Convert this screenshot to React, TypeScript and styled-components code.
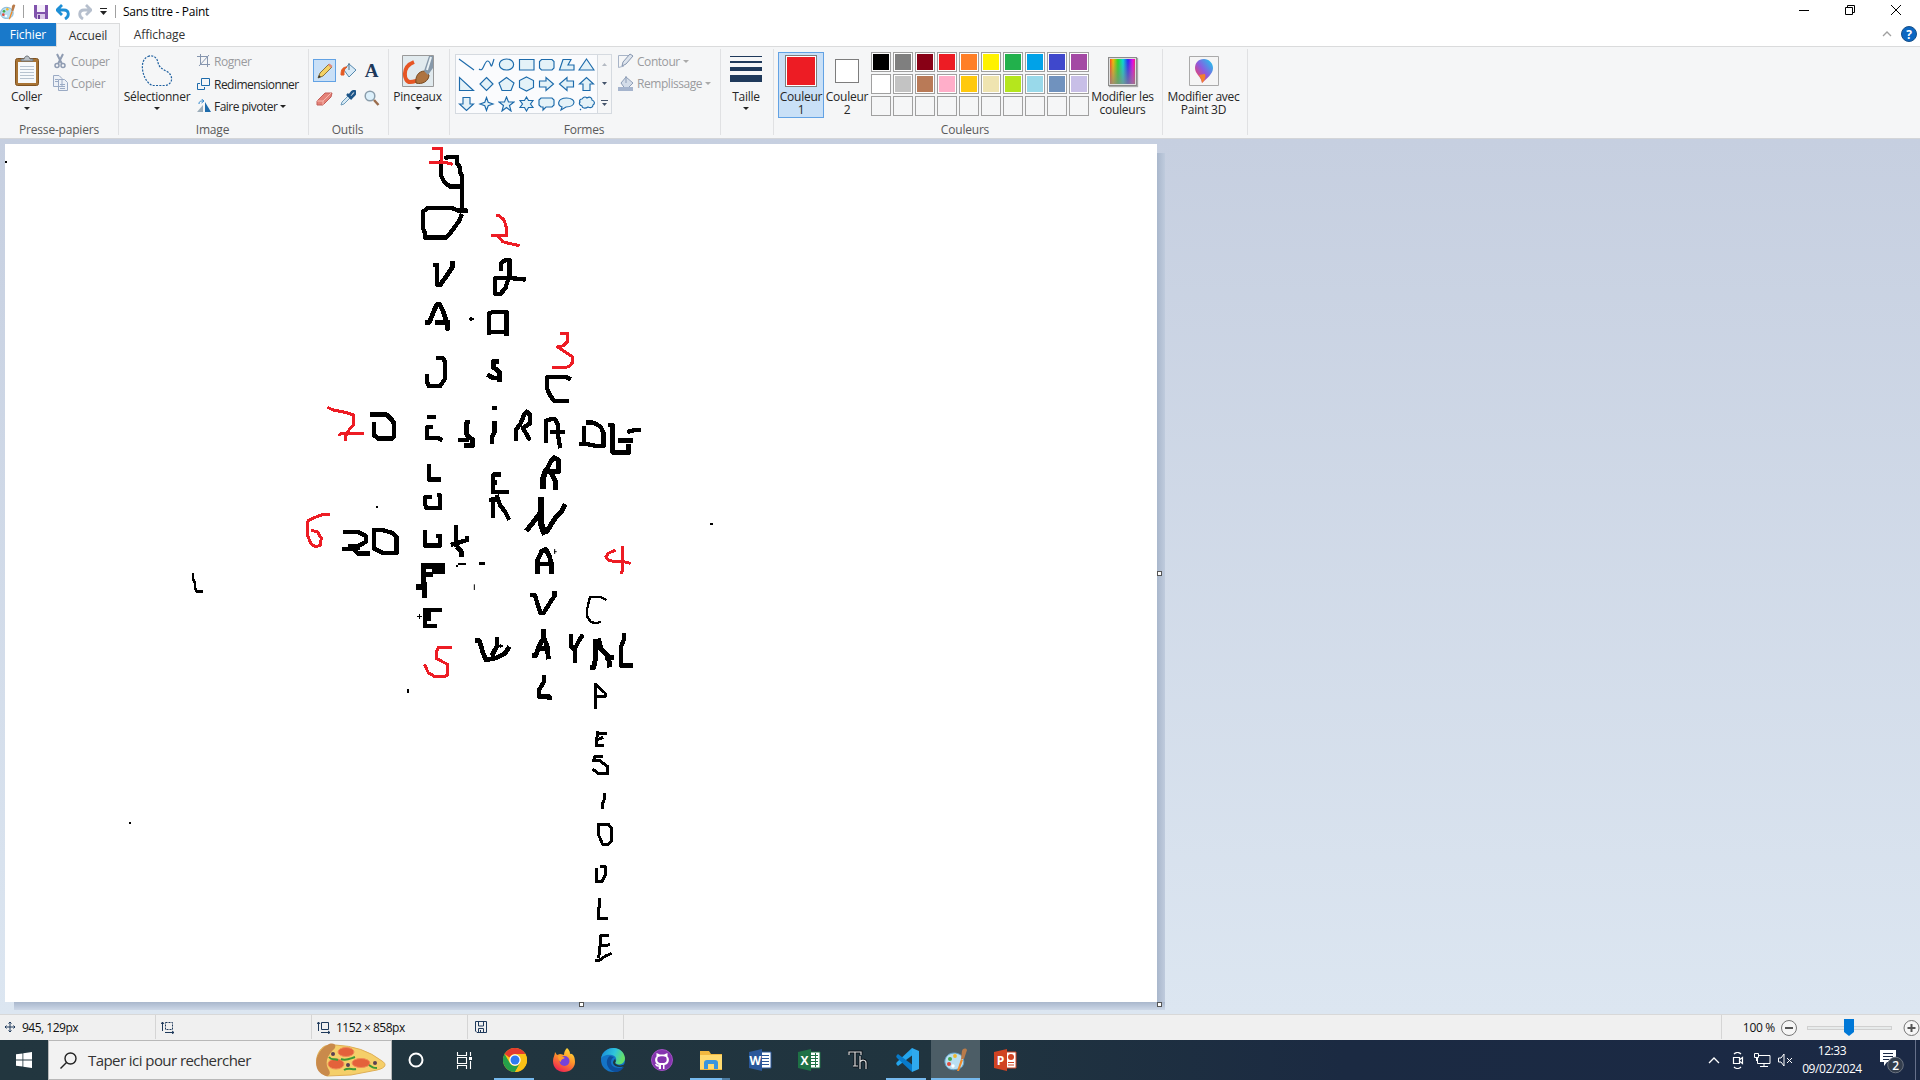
import React from "react";
import styled, { createGlobalStyle } from "styled-components";

const Global = createGlobalStyle`
  * { box-sizing: border-box; }
  body { margin: 0; overflow: hidden; background: #fff; }
  svg { display: block; flex: none; }
`;

const Window = styled.div`
  width: 1920px; height: 1080px; display: flex; flex-direction: column;
  font: 12px "Open Sans", "Noto Sans", sans-serif; color: #262626; letter-spacing: -0.2px;
  white-space: nowrap; overflow: hidden;
`;

/* ---------- title bar and tabs ---------- */
const TitleBar = styled.header`
  height: 23px; flex: none; display: flex; align-items: center; background: #fff; color: #000;
  line-height: 23px; letter-spacing: -0.3px;
`;
const QuickDivider = styled.i<{ $l: number; $r: number }>`
  width: 1px; height: 13px; background: #a0a0a0; margin: 0 ${p => p.$r}px 0 ${p => p.$l}px;
`;
const QuickIcon = styled.span<{ $r: number }>`margin-right: ${p => p.$r}px;`;
const WindowTitle = styled.span`flex: 1;`;
const WindowButtons = styled.div`
  display: flex; padding: 0 1px 3px 0;
  button { all: unset; width: 46px; height: 20px; display: grid; place-items: center; }
`;

const Tabs = styled.nav`height: 24px; flex: none; display: flex; border-bottom: 1px solid #dadbdc; background: #fff;`;
const Tab = styled.div<{ $w: number; $kind?: "file" | "active" }>`
  width: ${p => p.$w}px; text-align: center; line-height: 24px; letter-spacing: ${p => (p.$kind ? -0.1 : 0)}px;
  height: ${p => (p.$kind === "active" ? 24 : 23)}px;
  background: ${p => (p.$kind === "file" ? "#1979ca" : p.$kind === "active" ? "#f5f6f7" : "#fff")};
  color: ${p => (p.$kind === "file" ? "#fff" : "#333")};
  border: ${p => (p.$kind === "active" ? "1px solid #dadbdc" : "0")}; border-bottom: 0;
`;
const TabTools = styled.div`margin-left: auto; display: flex; align-items: center; gap: 9px; padding: 0 3px 1px 0;`;

/* ---------- ribbon ---------- */
const Ribbon = styled.section`
  height: 92px; flex: none; display: flex; background: #f5f6f7; border-bottom: 1px solid #d3d5d8; padding-top: 2px;
`;
const Group = styled.div<{ $w: number }>`
  width: ${p => p.$w}px; height: 86px; border-right: 1px solid #e0e1e3; display: flex; flex-direction: column;
`;
const GroupBody = styled.div<{ $l?: number }>`height: 72px; flex: none; display: flex; padding-left: ${p => p.$l ?? 0}px;`;
const GroupLabel = styled.div<{ $r?: number }>`height: 17px; flex: none; line-height: 17px; text-align: center; color: #5a5a5a; padding-right: ${p => p.$r ?? 0}px;`;
const Big = styled.div<{ $w: number; $on?: boolean }>`
  width: ${p => p.$w}px; height: 66px; margin-top: 3px; display: flex; flex-direction: column; align-items: center;
  background: ${p => (p.$on ? "#c9e0f7" : "transparent")};
  box-shadow: ${p => (p.$on ? "inset 0 0 0 1px #62a2e4" : "none")};
`;
const BigIcon = styled.div`height: 38px; display: grid; place-items: center;`;
const BigLabel = styled.div`line-height: 13px; text-align: center; white-space: pre; letter-spacing: -0.25px;`;
const Arrow = styled.i<{ $c?: string; $t?: number; $l?: number }>`
  width: 0; height: 0; border: 3px solid transparent; border-bottom: 0; border-top-color: ${p => p.$c ?? "#222"};
  margin-top: ${p => p.$t ?? 0}px; margin-left: ${p => p.$l ?? 0}px;
`;
const Rows = styled.div<{ $l?: number }>`display: flex; flex-direction: column; padding-top: 2px; margin-left: ${p => p.$l ?? 0}px;`;
const Row = styled.div<{ $off?: boolean }>`
  height: 22px; display: flex; align-items: center; gap: 3px; color: ${p => (p.$off ? "#9a9b9e" : "#262626")};
  letter-spacing: ${p => (p.$off ? -0.45 : -0.53)}px; margin-top: ${p => (p.$off ? -1 : 0)}px; margin-bottom: ${p => (p.$off ? 1 : 0)}px;
`;
const ToolGrid = styled.div`display: grid; grid-template-columns: 23px 24px 23px; grid-template-rows: 23px 32px; padding: 10px 0 0 4px;`;
const Tool = styled.div<{ $on?: boolean }>`
  display: grid; place-items: center; ${p => p.$on && "background:#c9e0f7;box-shadow:inset 0 0 0 1px #62a2e4;"}
`;
const Gallery = styled.div`
  width: 157px; height: 60px; margin-top: 5px; border: 1px solid #d5dae0; background: #fafbfd; display: flex;
`;
const ShapeGrid = styled.div`width: 141px; display: grid; grid-template-columns: repeat(7, 20px); grid-template-rows: 19px 20px 19px; place-items: center;`;
const GalleryScroll = styled.div`
  flex: 1; border-left: 1px solid #d5dae0; background: #f5f6f7; display: grid; grid-template-rows: repeat(3, 1fr); place-items: center;
`;
const Bars = styled.div`width: 32px; i { display: block; background: #1e395b; margin-bottom: 4px; }`;
const Bar = styled.i<{ $h: number }>`height: ${p => p.$h}px;`;
const Current = styled.div<{ $s: number; $c: string }>`
  width: ${p => p.$s}px; height: ${p => p.$s}px; border: 1px solid #7d7d7d; padding: 1px;
  background: linear-gradient(${p => p.$c}, ${p => p.$c}) content-box, #fff;
`;
const Palette = styled.div`display: grid; grid-template-columns: repeat(10, 20px); grid-auto-rows: 20px; gap: 2px; padding-top: 1px;`;
const Swatch = styled.i<{ $c?: string }>`
  border: 1px solid #a0a0a0; padding: 1px; background: ${p => (p.$c ? `linear-gradient(${p.$c}, ${p.$c}) content-box, #fff` : "#f5f6f7")};
`;
const Spectrum = styled.div`
  width: 29px; height: 29px; border: 1px solid #8a8a8a; box-shadow: inset 0 0 0 1px #ddd, 1px 1px 1px #aaa;
  background: linear-gradient(transparent, #888c), linear-gradient(90deg, #f22, #fb0 15%, #2d2 33%, #0dd 52%, #22f 70%, #e0e 88%, #f24);
`;

/* ---------- workspace ---------- */
const Workspace = styled.main`height: 875px; flex: none; padding: 5px 0 0 5px; background: linear-gradient(#c6cfe0, #dce6f1);`;
const Sheet = styled.div`position: relative; width: 1152px; height: 858px; background: #fff;`;
const ShadowRight = styled.i`position: absolute; left: 1152px; top: 9px; width: 8px; height: 857px; background: linear-gradient(90deg, #a9b7cc, #bfcbdd);`;
const ShadowBottom = styled.i`position: absolute; left: 9px; top: 858px; width: 1151px; height: 8px; background: linear-gradient(#a9b7cc, #ccd7e7);`;
const Handle = styled.i<{ $x: number; $y: number }>`
  position: absolute; left: ${p => p.$x}px; top: ${p => p.$y}px; width: 5px; height: 5px; background: #fff; border: 1px solid #555;
`;

/* ---------- status bar ---------- */
const Status = styled.footer`height: 26px; flex: none; display: flex; background: #f0f0f0; border-top: 1px solid #d8d8d8; color: #111;`;
const Cell = styled.div<{ $w: number; $l?: number }>`
  width: ${p => p.$w}px; height: 24px; border-right: 1px solid #d5d5d5; display: flex; align-items: center; gap: 6px; padding-left: ${p => p.$l ?? 4}px;
  letter-spacing: -0.5px;
`;
const ZoomArea = styled.div`flex: 1; display: flex; align-items: center; padding-left: 21px; letter-spacing: -0.3px;`;
const Track = styled.div`width: 85px; height: 4px; margin: 0 11px 0 6px; border: 1px solid #d0d0d0; background: #e7eaea; display: flex; align-items: center; justify-content: center;`;

/* ---------- taskbar ---------- */
const Taskbar = styled.footer`height: 40px; flex: none; display: flex; background: linear-gradient(90deg, #22363f, #20343f 50%, #1b2a42 70%, #1b2945); color: #fff;`;
const Slot = styled.div<{ $w: number; $on?: boolean; $run?: boolean; $stack?: boolean }>`
  width: ${p => p.$w}px; height: 40px; display: flex; align-items: center; justify-content: center;
  background: ${p => (p.$on ? "#4c5d66" : "transparent")};
  ${p => p.$run && `background-image: linear-gradient(#76b9ed, #76b9ed)${p.$stack ? ", linear-gradient(#4b7ba0, #4b7ba0)" : ""};
    background-repeat: no-repeat; background-size: ${p.$on ? 49 : p.$stack ? 32 : 40}px 2px, 8px 2px; background-position: ${p.$on ? 0 : 4}px 38px, 36px 38px;`}
`;
const Search = styled.div`
  width: 344px; height: 40px; background: #f2f2f2; border: 1px solid #b8b8b8; display: flex; align-items: center; color: #333;
  font-size: 15px; letter-spacing: -0.56px; padding-left: 11px; gap: 11px;
`;
const SearchText = styled.span`width: 216px;`;
const Apps = styled.div`display: flex; padding-left: 2px;`;
const Tray = styled.div`margin-left: auto; display: flex; align-items: center;`;
const TrayIcon = styled.span<{ $w: number }>`width: ${p => p.$w}px; display: grid; place-items: center;`;
const Clock = styled.div`width: 70px; text-align: center; line-height: 18px; letter-spacing: -0.4px;`;
const Desktop = styled.i`width: 5px; height: 40px; border-left: 1px solid #66708a;`;

const B = "#1d6bab";
const Svg = ({ s = 16, h, v, children }: { s?: number; h?: number; v?: string; children: React.ReactNode }) => (
  <svg width={s} height={h ?? s} viewBox={v ?? `0 0 ${s} ${h ?? s}`} fill="none">{children}</svg>
);

const PaintIcon = ({ s = 16 }: { s?: number }) => (
  <Svg s={s} v="0 0 24 24">
    <path d="M10 5C4 5 0 10 1 15c1 6 7 8 13 6 5-1 7-6 5-11-1-3-5-5-9-5Z" fill="#b9dff2" stroke="#5d9cc3" />
    <circle cx="6" cy="11" r="2" fill="#46a94d" /><circle cx="11" cy="8" r="1.9" fill="#f0b72d" /><circle cx="5" cy="16" r="2" fill="#e04b3e" /><circle cx="9" cy="18" r="1.7" fill="#fff" />
    <path d="m13 23 4-12 2 1-4 11Z" fill="#ef8b2c" /><path d="m17 11 1-8c1-3 4-3 5-1l-3 9Z" fill="#b97b4a" />
  </Svg>
);

const Ink = ({ d, w = 14, c = "#000" }: { d: string; w?: number; c?: string }) => <path d={d} strokeWidth={w} stroke={c} />;
const RED = "#ed1c24";

const Drawing = () => (
  <svg width="1152" height="858" viewBox="5 144 1152 858" fill="none" shapeRendering="crispEdges" strokeLinejoin="round">
    <g transform="translate(280 140) scale(.33333)">
      <Ink w={13} d="M494 57L502 51H532V72L540 82V98L546 106V214M484 60V108L492 125L510 140H546M534 214H563" />
      <Ink w={13} d="M546 222L536 245L510 280L497 293H436V282L429 265V215L442 205H518L535 212H560" />
      <Ink d="M459 375H471V434H481L505 400L518 380V364" />
      <Ink w={13} d="M663 392V370L675 361H689V412M645 464V415H700L737 419M684 420L676 445L660 463H641" />
      <Ink d="M435 547H448L462 512L470 494H480L490 515L500 545L504 572M465 547H509" />
      <Ink w={4} d="M567 537H581M573 531V543" />
      <Ink w={13} d="M628 584V520L636 517H680V587M622 577H684" />
      <Ink w={13} d="M468 655H488L496 665V715L480 739H447L441 725V703" />
      <Ink d="M657 664H640V682L658 695V725M622 704L640 714H662" />
      <Ink w={13} d="M872 718L860 712H801V745L810 765L822 783H866" />
      <Ink w={9} c={RED} d="M457 26H485V67M447 67H495L518 73M648 227H658L672 240L680 265V286H633M655 290L668 305L690 311L719 317M840 580H862V605L850 617L832 621L842 627L862 640L877 650V668L866 680L850 683H816" />
    </g>
    <g transform="translate(280 400) scale(.33333)">
      <Ink d="M271 43H318L335 58L342 70V110L335 116H295L282 105V67" />
      <Ink w={13} d="M441 52H467M458 82H441V115H476L487 120M569 66H560V105L578 118V137H553M535 121H566" />
      <Ink d="M635 24H650" /><Ink d="M644 62V95L636 112V131" />
      <Ink w={13} d="M708 122V90L722 70L732 45L740 35L750 45V70L728 85L735 95L750 121" />
      <Ink w={13} d="M799 130V62L812 58H825L834 75V105L841 145M810 97H855" />
      <Ink w={13} d="M917 68H940L962 80L971 100V138H948M913 78V130M898 133H925L950 138" />
      <Ink w={13} d="M985 76H998V158H1046V133M1015 122H1058M1042 96L1060 91H1083" />
      <Ink w={13} d="M448 192V239H483M470 286H480V325H440L436 315V292H455" />
      <Ink w={13} d="M662 224H640V280M640 248H650M634 277H687M628 300H657M639 290V353M650 285L660 315L675 335L688 360" />
      <Ink w={17} d="M800 205L789 235V268" /><Ink d="M798 212L814 182L822 173L836 180V215H800M814 220L827 245V270" />
      <Ink w={15} d="M739 393L760 366L780 340" /><Ink w={19} d="M784 292V375L795 404" /><Ink w={15} d="M797 400L825 355L845 333L856 313" />
      <Ink w={6} d="M289 321h6M384 867V879" />
      <Ink w={13} d="M189 396H235L258 408V425L235 438H205M270 461H235L222 447H187" />
      <Ink w={14} d="M205 442H240" />
      <Ink w={13} d="M282 385V445L310 460H350V410L335 398L310 391H276" />
      <Ink w={13} d="M436 390V437H480V403M467 409H485M528 376V440M512 435L545 425L562 420V408M530 440L545 455V470" />
      <Ink w={5} d="M529 498h6M535 492H557M411 650H425M419 643V657M657 738H668M662 732V744" />
      <Ink w={8} d="M597 491H615" /><Ink w={3} d="M583 553V570M822 455H830M824 447V462" />
      <Ink w={15} d="M430 490V570M433 545V593" /><Ink w={18} d="M423 498H494" /><Ink w={14} d="M457 514H494" /><Ink w={14} d="M430 523H460" /><Ink w={18} d="M408 561H436" />
      <Ink w={13} d="M428 630H486M430 679H470M435 630V685" /><Ink w={24} d="M441 624V662" />
      <Ink d="M773 522V480L785 454L798 448L808 468L814 490V522M775 492H820" />
      <Ink w={13} d="M750 586H765L772 610L782 640H790L815 600L824 588V574" />
      <Ink w={7} d="M980 600L960 591H930L922 625V650L932 665L945 670L962 666" />
      <Ink d="M757 766H768L776 740L790 715V688M790 710L800 735L806 778M770 745H810" />
      <Ink d="M585 722H598L608 755L618 780L650 773L675 760L688 740M651 712V738L635 768" />
      <Ink w={13} d="M873 702V738L885 750V788M885 745L897 722L909 704" />
      <Ink w={15} d="M931 802H941L948 770V716M955 715L962 745L985 770L990 802M975 772H1002" />
      <Ink w={13} d="M1033 700V715L1023 740V797H1058" />
      <Ink w={13} d="M792 826V845L777 870V890H809V899" />
      <Ink w={9} c={RED} d="M142 22L160 30L200 38L221 45V75L208 88L196 110V124M177 108L183 100H251M150 343H130L105 352L84 362V410L92 430L105 440L120 437L124 415L112 395L93 391M1006 450L985 460L978 470L985 480L1000 484H1025L1052 490M1029 438V490L1025 523M515 743H475L469 755V775L502 793V825L495 830H465L445 818L433 793" />
    </g>
    <g transform="translate(540 670) scale(.33333)">
      <Ink w={8} d="M166 116V42L196 70V80H168" />
      <Ink w={9} d="M172 183V190H201M172 190L169 228H191M172 209L190 202M188 259H165L160 272H180L203 290V312H178L157 297M194 370V385L188 400V416M176 463V495L188 523H205L215 512V475L205 463H172M169 594V635H186L196 615V590H180M179 684V705L175 720V745H203M207 797H183L180 830L176 865M176 828H195L210 823M165 873H175L195 859L215 850" />
    </g>
    <path d="M193 573V579L195 583V588L197 591.500H203" stroke="#000" strokeWidth="2.6" />
    <path d="M5 162h2M129 823h2M710 524h3" stroke="#000" strokeWidth="2" />
  </svg>
);

const shapes: string[] = [
  "M1 2 16 13", "M1 12C6 16 6 3 10 4s2 12 6-2", "M8.500 2C-1 2-1 13 8.500 13S18 2 8.500 2Z", "M1.500 2.500H16V13H1.500Z",
  "M3.500 2.500H14l2 2V11l-2 2H3.500l-2-2V4.500Z", "M5 2.500h8L10 8h6v5H1.500Z", "M8.500 2 16 13H1Z",
  "M1.500 1.500V14.500H15.500Z", "M8.500 1.500 15 8 8.500 14.500 2 8Z", "M8.500 1.500 16 7 13 14.500H4L1 7Z", "M8.500 1 15.500 4.500v7L8.500 15 1.500 11.500v-7Z",
  "M1.500 5H8V1.500L15.500 8 8 14.500V11H1.500Z", "M15.500 5H9V1.500L1.500 8 9 14.500V11h6.500Z", "M5 14.500V8H1.500L8.500 1.500 15.500 8H12v6.500Z",
  "M5 1.500V8H1.500l7 6.500 7-6.500H12V1.500Z", "m8.500 1.500 1.700 4.800L15 8l-4.800 1.700-1.700 4.800-1.700-4.800L2 8l4.800-1.700Z",
  "m8.500 1 2 5H16l-4.500 3.500L13 15l-4.500-3.500L4 15l1.500-5.500L1 6h5.500Z", "m8.500 1 2 3.500H15L12.500 8l2.500 3.500h-4.500l-2 3.500-2-3.500H2L4.500 8 2 4.500h4.500Z",
  "M3 2h11l2 2v5l-2 2H8l-3 3v-3H3L1 9V4Z", "M8.500 2C-1 2-1 10 4 11l-1 3 5-3c10 0 11-9 .5-9Z", "M4 3c2-3 4-2 5-1 3-2 5 0 5 2 3 1 3 4 1 5 0 3-3 3-5 2-3 2-6 1-6-1-3-1-3-3-2-4-1-1 0-3 2-3ZM3 13l-1 1",
];

const colors = [
  "#000", "#7f7f7f", "#880015", "#ed1c24", "#ff7f27", "#fff200", "#22b14c", "#00a2e8", "#3f48cc", "#a349a4",
  "#fff", "#c3c3c3", "#b97a57", "#ffaec9", "#ffc90e", "#efe4b0", "#b5e61d", "#99d9ea", "#7092be", "#c8bfe7",
];

const Office = ({ c, t, sheet }: { c: string; t: string; sheet: React.ReactNode }) => (
  <Svg s={24}>
    <path d="M12 4h11v16H12" fill="#fff" stroke={c} />{sheet}
    <path d="M1 4 14 1v22L1 20Z" fill={c} />
    <text x="7.300" y="16.500" textAnchor="middle" fill="#fff" fontFamily="Open Sans, sans-serif" fontWeight="700" fontSize="12">{t}</text>
  </Svg>
);

const BucketArt = ({ grey }: { grey?: boolean }) => (
  <>
    <path d="m4 8 5-6 7 6-7 7Z" fill={grey ? "#d4dde9" : "#d8eaf7"} stroke={grey ? "#8d9db6" : "#5488ae"} />
    <path d="M9 8V1" stroke={grey ? "#8d9db6" : "#4c7089"} />
    {grey ? <path d="M1 12h15v4H1Z" fill="#a5b4cd" /> : <path d="M1 13c0-6 2-8 6-8-3 2-3 4-3 8Z" fill="#e45a22" stroke="#e45a22" />}
  </>
);

export default function App() {
  return (
    <Window>
      <Global />
      <TitleBar>
        <QuickIcon $r={7}><PaintIcon /></QuickIcon>
        <QuickDivider $l={0} $r={10} />
        <QuickIcon $r={8}>
          <Svg s={14} h={14}><path d="M0 0h14v14H2l-2-2Z" fill="#8153ad" /><path d="M3 0h8v7H3Z" fill="#f4eefa" /><path d="M3 9h8v5H3Z" fill="#d9c9e8" /><path d="M4 10h2v4H4Z" fill="#6d419a" /></Svg>
        </QuickIcon>
        <QuickIcon $r={8}>
          <Svg s={14} h={16}><path d="m6 1-5 5 5 5M2 6h6c5 0 6 6 1 9" stroke="#1e8fd6" strokeWidth="2.800" /></Svg>
        </QuickIcon>
        <QuickIcon $r={8}>
          <Svg s={14} h={16}><path d="m8 1 5 5-5 5M12 6H6c-5 0-6 6-1 9" stroke="#b6bfcd" strokeWidth="2.800" /></Svg>
        </QuickIcon>
        <Svg s={7} h={9}><path d="M0 1.500h7" stroke="#222" /><path d="M0 4h7L3.500 8Z" fill="#222" /></Svg>
        <QuickDivider $l={8} $r={7} />
        <WindowTitle>Sans titre - Paint</WindowTitle>
        <WindowButtons>
          <button><Svg s={10}><path d="M0 5.500h10" stroke="#000" /></Svg></button>
          <button><Svg s={10}><path d="M.5 2.500h7v7h-7ZM2.500 2V.5h7v7H8" stroke="#000" /></Svg></button>
          <button><Svg s={10}><path d="m0 0 10 10M10 0 0 10" stroke="#000" /></Svg></button>
        </WindowButtons>
      </TitleBar>
      <Tabs>
        <Tab $w={56} $kind="file">Fichier</Tab>
        <Tab $w={64} $kind="active">Accueil</Tab>
        <Tab $w={79}>Affichage</Tab>
        <TabTools>
          <Svg s={10} h={6}><path d="m1 5 4-4 4 4" stroke="#a0a0a0" strokeWidth="1.300" /></Svg>
          <Svg s={16}><circle cx="8" cy="8" r="7.500" fill="#0c67c2" stroke="#174f88" /><text x="8" y="12.500" fill="#fff" fontSize="12" fontWeight="700" textAnchor="middle">?</text></Svg>
        </TabTools>
      </Tabs>

      <Ribbon>
        <Group $w={119}>
          <GroupBody>
            <Big $w={53}>
              <BigIcon><Svg s={26} h={32}><rect x="1.500" y="3.500" width="23" height="27" rx="2" fill="#a87435" stroke="#805321" /><path d="M4 7h18v21H4Z" fill="#f6f9fb" /><path d="M6 11.500h14M6 14.500h14M6 17.500h14M6 20.500h14M6 23.500h14" stroke="#b7c3cf" /><path d="M7 6V4h3c1-4 5-4 6 0h3v2Z" fill="#b9c0c6" stroke="#6d747a" /></Svg></BigIcon>
              <BigLabel>Coller</BigLabel><Arrow $t={4} />
            </Big>
            <Rows>
              <Row $off><Svg s={15} h={16}><path d="M4 1 9 11M10 1 5 11" stroke="#8f9cb2" strokeWidth="2" /><circle cx="4" cy="12.500" r="2" stroke="#8f9cb2" strokeWidth="1.500" /><circle cx="10" cy="12.500" r="2" stroke="#8f9cb2" strokeWidth="1.500" /></Svg>Couper</Row>
              <Row $off><Svg s={15} h={16}><path d="M.5.500H6l3 3v8H.5ZM5.500 4.500h6l3 3v8h-9Z" fill="#edf1f7" stroke="#9aaac4" /><path d="M7 9.500h5M7 11.500h5M7 13.500h5M2 4.500h3M2 6.500h3" stroke="#9aaac4" /></Svg>Copier</Row>
            </Rows>
          </GroupBody>
          <GroupLabel>Presse-papiers</GroupLabel>
        </Group>

        <Group $w={190}>
          <GroupBody $l={4}>
            <Big $w={68}>
              <BigIcon><Svg s={32}><path d="M7 1.500c5-2 9 1 10 6s5 7 9 9c7 4 6 14-3 14H12C3 29-4 6 7 1.500Z" stroke="#1d5f9f" strokeDasharray="2 1.300" strokeWidth="1.200" /></Svg></BigIcon>
              <BigLabel>Sélectionner</BigLabel><Arrow $t={4} />
            </Big>
            <Rows $l={6}>
              <Row $off><Svg s={14}><path d="M3.500 0v10.500H13M0 2.500h10.500V13M2 12 12 1" stroke="#8595ae" /></Svg>Rogner</Row>
              <Row><Svg s={14}><path d="M4.500 1.500h8v7h-8Z" stroke={B} /><path d="M3 6.500H.5v6h7V10" stroke={B} /></Svg>Redimensionner</Row>
              <Row><Svg s={14}><path d="M0 13 6 6v7Z" fill="#9cadba" /><path d="M8 3v10h6Z" fill="#1d6bab" /><path d="M2 5c0-3 2-3 4-3M4.500 0 7 2 4.500 4" stroke="#2d85cc" /></Svg>Faire pivoter<Arrow /></Row>
            </Rows>
          </GroupBody>
          <GroupLabel $r={2}>Image</GroupLabel>
        </Group>

        <Group $w={80}>
          <GroupBody>
            <ToolGrid>
              <Tool $on><Svg><path d="m1 15 2-5L12 1l3 3-9 9Z" fill="#f4d264" stroke="#8b743d" /><path d="m1 15 1-3 2 2Z" fill="#333" /><path d="m11 2 1.500-1.500L15.500 3 14 5Z" fill="#e28b7c" /></Svg></Tool>
              <Tool><Svg s={17}><BucketArt /></Svg></Tool>
              <Tool><Svg s={15}><text x="7.500" y="14" textAnchor="middle" fontFamily="Liberation Serif, serif" fontWeight="700" fontSize="19" fill="#1e395b">A</text></Svg></Tool>
              <Tool><Svg s={17}><path d="m1 11 8-8h7l-1 4-8 8H1Z" fill="#e48278" stroke="#c25e59" /><path d="m1 11h6l8-8M7 11v4" stroke="#f6b7ad" /></Svg></Tool>
              <Tool><Svg><path d="m1 15 1-3 7-7 2 2-7 7Z" fill="#d7eaf5" stroke="#6d9bba" /><path d="m7 4 5 5M9 6l3-4c3-2 5 0 2 3l-3 3" stroke="#1d5588" strokeWidth="2.500" /></Svg></Tool>
              <Tool><Svg><circle cx="6" cy="6" r="4.800" fill="#dcf0fb" stroke="#8a9dab" strokeWidth="1.500" /><path d="m10 10 4.500 5" stroke="#9b6d4d" strokeWidth="2.500" /></Svg></Tool>
            </ToolGrid>
          </GroupBody>
          <GroupLabel $r={2}>Outils</GroupLabel>
        </Group>

        <Group $w={61}>
          <GroupBody>
            <Big $w={57}>
              <BigIcon><Svg s={32}><path d="M.5.500h31v31H.5Z" fill="#e1eaee" stroke="#999" /><path d="M12 7C-1 12 2 27 8 27s5-2 10-1" stroke="#e65524" strokeWidth="4" /><path d="M14 28c-1-6 2-12 9-12l4 4c0 6-7 10-13 8Z" fill="#ae7340" stroke="#77491f" /><path d="m22 16 5-15h4v12l-5 7Z" fill="#8799aa" /><path d="m25 15 4-13" stroke="#e8f1f5" strokeWidth="2" /></Svg></BigIcon>
              <BigLabel>Pinceaux</BigLabel><Arrow $t={4} />
            </Big>
          </GroupBody>
        </Group>

        <Group $w={271}>
          <GroupBody $l={5}>
            <Gallery>
              <ShapeGrid>{shapes.map((d, i) => <Svg key={i} s={17} h={16}><path d={d} fill={i < 2 ? "none" : "#e4f2f8"} stroke={B} strokeWidth="1.150" /></Svg>)}</ShapeGrid>
              <GalleryScroll>
                <Svg s={5} h={3}><path d="M0 3h5L2.500 0Z" fill="#b4bac3" /></Svg>
                <Svg s={5} h={3}><path d="M0 0h5L2.500 3Z" fill="#43536a" /></Svg>
                <Svg s={7} h={7}><path d="M0 .5h7" stroke="#43536a" /><path d="M1 3h5L3.500 6Z" fill="#43536a" /></Svg>
              </GalleryScroll>
            </Gallery>
            <Rows $l={5}>
              <Row $off><Svg s={17}><path d="M12 2.500H1.500v12L7 13" stroke="#a8b4c7" /><path d="m5 13 1-4 7-8 3 2-7 8Z" fill="#dde4ed" stroke="#8696b0" /></Svg>Contour<Arrow $c="#aaa" /></Row>
              <Row $off><Svg s={17}><BucketArt grey /></Svg>Remplissage<Arrow $c="#aaa" /></Row>
            </Rows>
          </GroupBody>
          <GroupLabel $r={2}>Formes</GroupLabel>
        </Group>

        <Group $w={53}>
          <GroupBody>
            <Big $w={50}>
              <BigIcon><Bars><Bar $h={1} /><Bar $h={2} /><Bar $h={4} /><Bar $h={7} /></Bars></BigIcon>
              <BigLabel>Taille</BigLabel><Arrow $t={4} />
            </Big>
          </GroupBody>
        </Group>

        <Group $w={389}>
          <GroupBody $l={4}>
            <Big $w={46} $on><BigIcon><Current $s={32} $c="#ed1c24" /></BigIcon><BigLabel>{"Couleur\n1"}</BigLabel></Big>
            <Big $w={46}><BigIcon><Current $s={24} $c="#fff" /></BigIcon><BigLabel>{"Couleur\n2"}</BigLabel></Big>
            <Rows $l={1}><Palette>{Array.from({ length: 30 }, (_, i) => <Swatch key={i} $c={colors[i]} />)}</Palette></Rows>
            <Big $w={67}><BigIcon><Spectrum /></BigIcon><BigLabel>{"Modifier les\ncouleurs"}</BigLabel></Big>
          </GroupBody>
          <GroupLabel $r={6}>Couleurs</GroupLabel>
        </Group>

        <Group $w={85}>
          <GroupBody>
            <Big $w={81}>
              <BigIcon>
                <Svg s={30}>
                  <defs>
                    <linearGradient id="drop" x1="1" y1="0" x2="0" y2="1"><stop stopColor="#10d4ee" /><stop offset=".5" stopColor="#8b5be0" /><stop offset=".8" stopColor="#e0447c" /><stop offset="1" stopColor="#f9b51c" /></linearGradient>
                  </defs>
                  <path d="M.5.500h29v29H.5Z" fill="#f5f5f5" stroke="#aaa" />
                  <path d="M15 3c-6 0-9 4-9 9 0 6 6 8 7 15 5-5 11-9 11-15 0-5-4-9-9-9Z" fill="url(#drop)" />
                  <path d="M10 19c1 2 3 5 3 8 3-3 4-6 3-9Z" fill="#f1812d" />
                </Svg>
              </BigIcon>
              <BigLabel>{"Modifier avec\nPaint 3D"}</BigLabel>
            </Big>
          </GroupBody>
        </Group>
      </Ribbon>

      <Workspace>
        <Sheet>
          <Drawing />
          <ShadowRight /><ShadowBottom />
          <Handle $x={1152} $y={427} /><Handle $x={574} $y={858} /><Handle $x={1152} $y={858} />
        </Sheet>
      </Workspace>

      <Status>
        <Cell $w={156}><Svg s={12}><path d="M6 1v10M1 6h10M4.500 2.500 6 1l1.500 1.500M4.500 9.500 6 11l1.500-1.500M2.500 4.500 1 6l1.500 1.500M9.500 4.500 11 6 9.500 7.500" stroke="#1e395b" /></Svg>945, 129px</Cell>
        <Cell $w={156} $l={5}><Svg s={13}><path d="M1.500 10V1M0 3l1.500-2L3 3M4 11.500h9M11 10l2 1.500-2 1.500" stroke="#1e395b" /><path d="M4.500 1.500h7v7h-7Z" stroke="#1e395b" strokeDasharray="2 1" /></Svg></Cell>
        <Cell $w={156} $l={5}><Svg s={13}><path d="M1.500 10V1M0 3l1.500-2L3 3M4 11.500h9M11 10l2 1.500-2 1.500M4.500 1.500h7v7h-7Z" stroke="#1e395b" /></Svg>1152 × 858px</Cell>
        <Cell $w={156} $l={7}><Svg s={12}><path d="M.5.500h11v11H2l-1.500-1.500ZM3.500 1v4h5V1M3.500 11V7.500h5V11M5.500 9v2" stroke="#1e395b" /></Svg></Cell>
        <Cell $w={1098} />
        <ZoomArea>
          100 %
          <Svg s={26} h={18}><circle cx="14" cy="9" r="7.500" fill="#f6f6f6" stroke="#777" /><path d="M10 9h8" stroke="#555" strokeWidth="2" /></Svg>
          <Track><Svg s={10} h={17}><path d="M0 0h10v13l-5 4-5-4Z" fill="#0078d7" /></Svg></Track>
          <Svg s={17} h={18}><circle cx="8.500" cy="9" r="7.500" fill="#f6f6f6" stroke="#777" /><path d="M4.500 9h8M8.500 5v8" stroke="#555" strokeWidth="2" /></Svg>
        </ZoomArea>
      </Status>

      <Taskbar>
        <Slot $w={48}><Svg s={16}><path d="M0 2.300 6.500 1.400v6.200H0ZM7.300 1.300 16 0v7.600H7.300ZM0 8.400h6.500v6.200L0 13.700ZM7.300 8.400H16V16l-8.700-1.300Z" fill="#fff" /></Svg></Slot>
        <Search>
          <Svg s={17}><circle cx="10.500" cy="6.500" r="5.500" stroke="#222" strokeWidth="1.400" /><path d="m6.500 10.500-6 6" stroke="#222" strokeWidth="1.400" /></Svg>
          <SearchText>Taper ici pour rechercher</SearchText>
          <Svg s={72} h={34}>
            <path d="M10 3C-1 9-2 28 12 33l24-1 26-5c9-2 10-6 5-9Q48 3 20 2Z" fill="#f5cf69" stroke="#dfae55" />
            <path d="M14 1c7-2 8 3 4 6-7 7-8 14-4 20 2 4 0 6-3 6C-4 29-1 8 14 1Z" fill="#c98a4b" />
            <ellipse cx="31" cy="9" rx="8" ry="4.500" fill="#e4613b" stroke="#f08c57" /><ellipse cx="21" cy="21" rx="8" ry="5" fill="#e4613b" stroke="#f08c57" /><ellipse cx="46" cy="20" rx="9" ry="4.500" fill="#e4613b" stroke="#f08c57" />
            <path d="M14 14c3 4 5 1 9 3M26 16c5 2 8 0 14-2M29 27c5-3 8 0 12-1M54 22c4 3 5 3 8 3" stroke="#3d9a34" strokeWidth="2" />
            <circle cx="18" cy="11" r="2" fill="#594052" /><circle cx="33" cy="22" r="2" fill="#594052" /><circle cx="60" cy="20" r="2" fill="#594052" />
          </Svg>
        </Search>
        <Slot $w={48}><Svg s={16}><circle cx="8" cy="8" r="6.500" stroke="#fff" strokeWidth="2" /></Svg></Slot>
        <Slot $w={48}><Svg s={17}><path d="M1.500 0v3.500h9V0M1.500 17v-3.500h9V17M1.500 5.500h9v6h-9ZM14.500 0v4M14.500 9v8" stroke="#fff" strokeWidth="1.100" /><path d="M13 5h3v3h-3Z" fill="#fff" /></Svg></Slot>
        <Apps>
          <Slot $w={49} $run>
            <Svg s={24}><circle cx="12" cy="12" r="12" fill="#fbc116" /><path d="M1.600 6A12 12 0 0 1 22.400 6H12a6 6 0 0 0-5.500 3.500Z" fill="#e33b2e" /><path d="M1.600 6A12 12 0 0 0 12 24l5.200-9A6 6 0 0 1 6.800 15Z" fill="#25a04a" /><path d="M12 24 17.200 15A6 6 0 0 0 17 8.700L16 6h6.400A12 12 0 0 1 12 24Z" fill="#fbc116" /><circle cx="12" cy="12" r="5.700" fill="#fff" /><circle cx="12" cy="12" r="4.500" fill="#2f7af0" /></Svg>
          </Slot>
          <Slot $w={49}>
            <Svg s={24}>
              <defs><linearGradient id="fox" x1=".8" y1="0" x2=".3" y2="1"><stop stopColor="#ffe23b" /><stop offset=".45" stopColor="#ff962a" /><stop offset="1" stopColor="#ee2052" /></linearGradient></defs>
              <path d="M15 0c2 2 3 3 3 6 3-1 5 3 5 8 0 6-5 10-11 10S1 20 1 13c0-4 2-6 2-9l2 3 3-1c2 0 3 1 4 1 0-3 1-5 3-7Z" fill="url(#fox)" />
              <circle cx="12.500" cy="13" r="5" fill="#7542d9" /><path d="M6 8c3-1 5 1 7 2-2 1-4 1-4 4-2-1-3-3-3-6Z" fill="#ff9d2b" />
            </Svg>
          </Slot>
          <Slot $w={49}>
            <Svg s={24}>
              <defs><linearGradient id="edge" x1="0" y1="0" x2="1" y2=".3"><stop stopColor="#1684d8" /><stop offset=".6" stopColor="#2fc5dc" /><stop offset="1" stopColor="#64df69" /></linearGradient></defs>
              <circle cx="12" cy="12" r="12" fill="#1474c7" />
              <path d="M0 11C2-3 22-4 24 10c0 6-6 8-10 5 2-2 2-7-3-8C6 6 1 8 0 11Z" fill="url(#edge)" />
              <path d="M9 8c-6 4-3 15 6 16 3 0 6-2 8-5-5 2-13 1-13-5 0-2 1-4 3-5Z" fill="#0e4e9b" />
              <path d="M14 15c2 3 7 3 10 1v2c-5 2-11 1-12-3 0-2 1-3 2-4 1 1 1 3 0 4Z" fill="#20363f" />
            </Svg>
          </Slot>
          <Slot $w={49}>
            <Svg s={22}><circle cx="11" cy="11" r="10.500" fill="#8534af" stroke="#a250c4" /><path d="M8.500 20v-3c-3 .6-3-1-4-2" stroke="#fff" strokeWidth="1.500" /><path d="M8.500 20v-4C3 15 3.500 9 5.500 7.500L5.500 4 9 5.500h4L16.500 4l0 3.500c2 1.500 2.500 7.500-3 8.500v4Z" fill="#fff" /><path d="M7 8c2-1 6-1 8 0 1.500 3 .5 5.500-2 6H9c-2.500-.5-3.500-3-2-6ZM10 16h2v5h-2Z" fill="#8534af" /></Svg>
          </Slot>
          <Slot $w={49} $run $stack><Svg s={24}><path d="M1 3h9l2 3h11v16H1Z" fill="#f2b840" /><path d="M1 7h22v14H1Z" fill="#ffda70" /><path d="M5 21v-6c0-2 1-3 3-3h8c2 0 3 1 3 3v6h-4v-5H9v5Z" fill="#3995de" /></Svg></Slot>
          <Slot $w={49}><Office c="#2b579a" t="W" sheet={<path d="M14 7.500h7M14 10.500h7M14 13.500h7M14 16.500h7" stroke="#2b579a" />} /></Slot>
          <Slot $w={49}><Office c="#1e7145" t="X" sheet={<path d="M14 7.500h7M14 10.500h7M14 13.500h7M14 16.500h7M18.500 5v14" stroke="#1e7145" />} /></Slot>
          <Slot $w={49}><Svg s={20}><path d="M1 5V2h12v3M7 2v14M5 16h5M12 6v13M12 12c2-3 6-2 6 1v6" stroke="#0a1118" strokeWidth="3" /><path d="M1 5V2h12v3M7 2v14M5 16h5M12 6v13M12 12c2-3 6-2 6 1v6" stroke="#ddd" strokeWidth="1.200" /></Svg></Slot>
          <Slot $w={49} $run><Svg s={24}><path d="M17 0 2 14c-1 1-1 2 0 3l1 1 16-12Z" fill="#23a5ed" /><path d="M17 24 2 10C1 9 1 8 2 7l1-1 16 12Z" fill="#087ac9" /><path d="m17 0 7 3v18l-7 3Z" fill="#2fa9ee" /></Svg></Slot>
          <Slot $w={49} $run $on><PaintIcon s={24} /></Slot>
          <Slot $w={49}><Office c="#d04423" t="P" sheet={<><circle cx="18" cy="9" r="3" fill="#d04423" /><path d="M15 14.500h6M15 17h6" stroke="#d04423" /></>} /></Slot>
        </Apps>
        <Tray>
          <TrayIcon $w={24}><Svg s={12} h={7}><path d="m1 6 5-5 5 5" stroke="#fff" strokeWidth="1.300" /></Svg></TrayIcon>
          <TrayIcon $w={24}><Svg s={12} h={17}><path d="M1.500 5.500h6v6h-6ZM8 7.500l2.500-2v6L8 9.500M2 2c2-2 5-2 7 0M2 15c2 2 5 2 7 0" stroke="#fff" strokeWidth="1.200" /></Svg></TrayIcon>
          <TrayIcon $w={24}><Svg s={17} h={16}><path d="M5 3.500h11v8H3.500V6M10 12v3M6 14.500h8M.5 1.500h4v4h-4ZM2.500 6v3" stroke="#fff" /></Svg></TrayIcon>
          <TrayIcon $w={23}><Svg s={15} h={14}><path d="M.5 5H3l3-4v12L3 9H.5ZM9 5l5 5M14 5l-5 5" stroke="#fff" /></Svg></TrayIcon>
          <Clock>12:33<br />09/02/2024</Clock>
          <TrayIcon $w={48}>
            <Svg s={26} h={28} ><path d="M2 4h16v12H9l-3 4v-4H2Z" fill="#fff" /><path d="M5 7.500h10M5 10.500h10M5 13.500h6" stroke="#1b2945" /><circle cx="17.500" cy="19" r="7.800" fill="#343e4d" stroke="#6b7380" /><text x="17.500" y="23.500" fontSize="12" fontWeight="600" fill="#fff" textAnchor="middle">2</text></Svg>
          </TrayIcon>
          <Desktop />
        </Tray>
      </Taskbar>
    </Window>
  );
}
